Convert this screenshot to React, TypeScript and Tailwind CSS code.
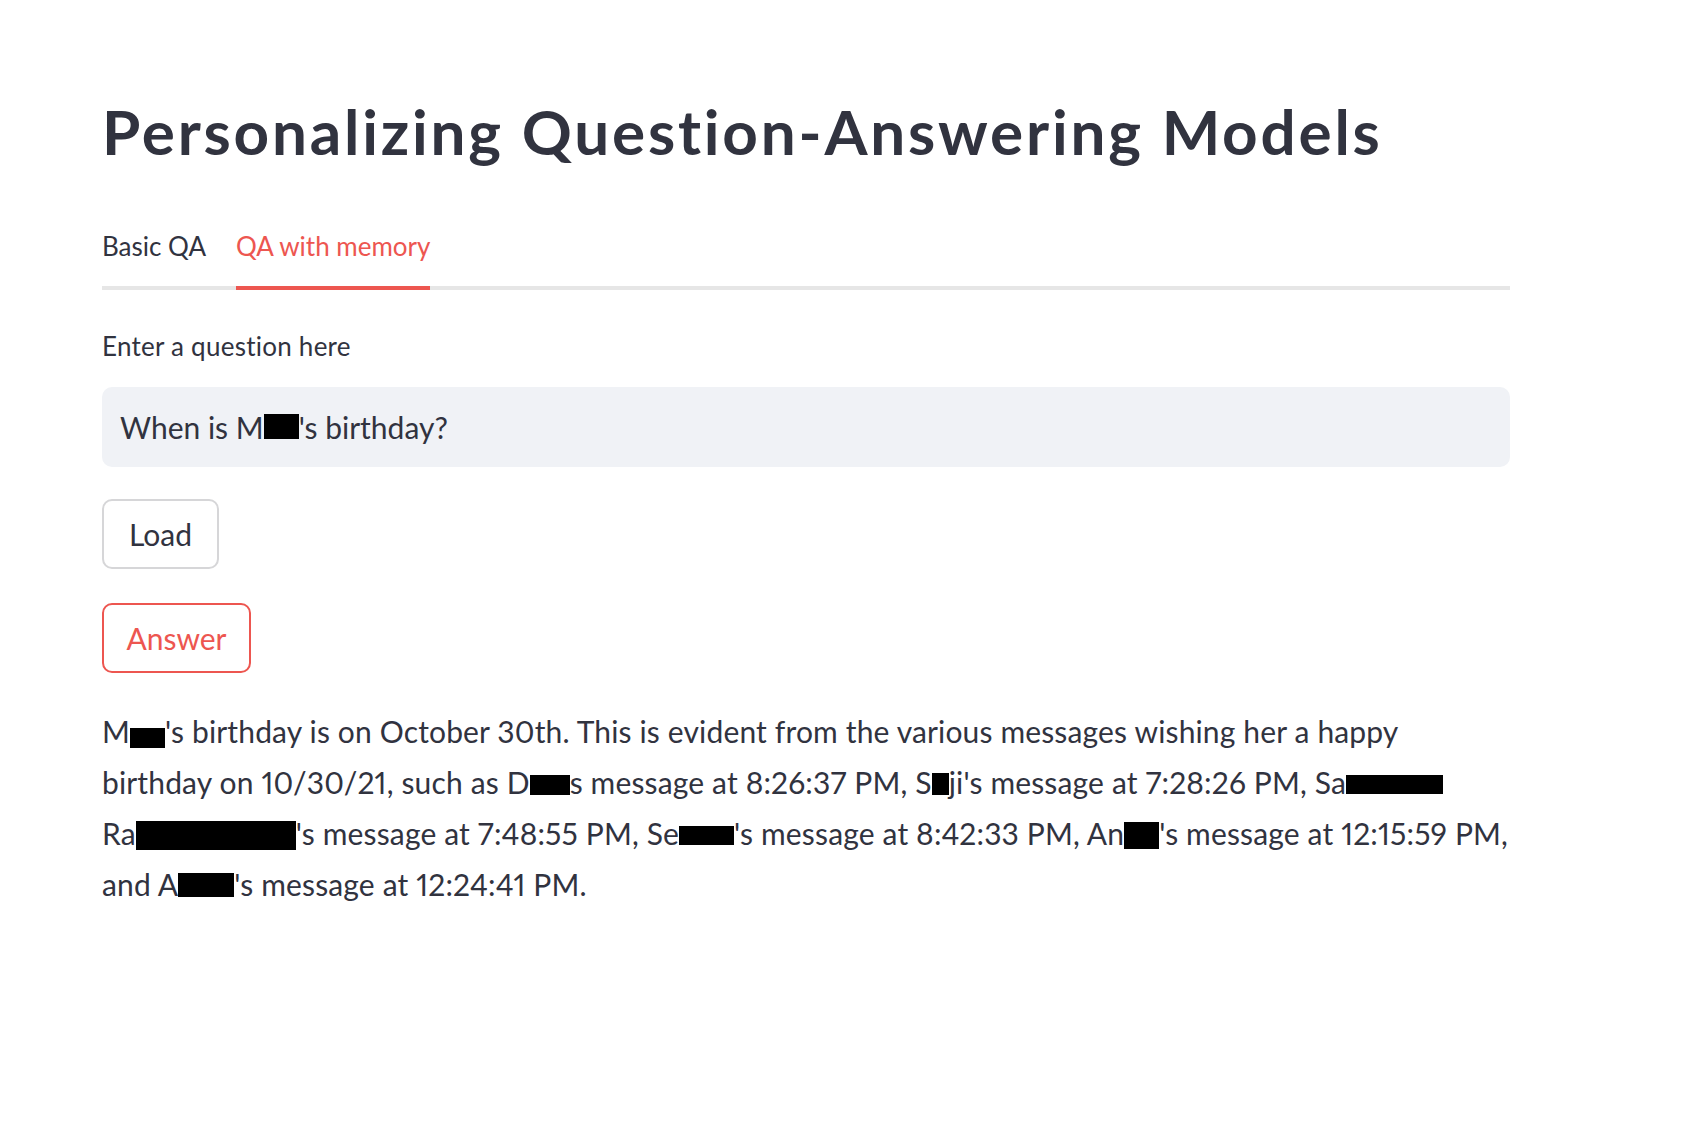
import React from "react";

const Redact: React.FC<{ className: string }> = ({ className }) => (
  <span className={`inline-block bg-black ${className}`} />
);

const App: React.FC = () => {
  return (
    <div className="min-h-screen bg-white font-['Lato',sans-serif] text-[#31333f]">
      <div className="ml-[102px] w-[1408px] pt-[95px]">
        <h1 className="text-[62px] font-bold leading-[73px] tracking-[2.8px]">Personalizing Question-Answering Models</h1>

        {/* tabs */}
        <div className="mt-[63px] flex gap-[30px] border-b-4 border-[#e6e6e6]">
          <button className="-mb-[4px] border-b-4 border-transparent pb-[25px] text-[26px] leading-[30px]">Basic QA</button>
          <button className="-mb-[4px] border-b-4 border-[#ed5650] pb-[25px] text-[26px] leading-[30px] text-[#ed5650]">
            QA with memory
          </button>
        </div>

        <label className="mt-[41px] block text-[26px] leading-[30px] tracking-[0.25px]">Enter a question here</label>
        <div className="mt-[26px] flex h-[80px] items-center rounded-[10px] bg-[#f0f2f6] pl-[18px] text-[30px]">
          <span>
            When is M<Redact className="h-[25px] w-[35px] align-[0px]" />'s birthday?
          </span>
        </div>

        <div className="mt-[32px] flex flex-col items-start gap-[34px]">
          <button className="flex h-[70px] w-[117px] items-center justify-center rounded-[10px] border-2 border-[#d6d6d8] text-[30px]">
            Load
          </button>
          <button className="flex h-[70px] w-[149px] items-center justify-center rounded-[10px] border-2 border-[#ed5650] text-[30px] text-[#ed5650]">
            Answer
          </button>
        </div>

        <p className="mt-[33px] whitespace-nowrap text-[30px] leading-[51px] tracking-[0.15px] proportional-nums">
          M<Redact className="h-[20px] w-[35px] align-[-5px]" />'s birthday is on October 30th. This is evident from the
          various messages wishing her a happy
          <br />
          birthday on 10/30/21, such as D<Redact className="h-[20px] w-[40px] align-[-1px]" />s message at 8:26:37 PM, S
          <Redact className="h-[22px] w-[17px] align-[-1px]" />ji's message at 7:28:26 PM, Sa
          <Redact className="h-[19px] w-[97px] align-[0px]" />
          <br />
          Ra<Redact className="h-[29px] w-[160px] align-[-5px]" />'s message at 7:48:55 PM, Se
          <Redact className="h-[19px] w-[55px] align-[0px]" />'s message at 8:42:33 PM, An
          <Redact className="h-[27px] w-[35px] align-[-4px]" />'s message at 12:15:59 PM,
          <br />
          and A<Redact className="h-[24px] w-[56px] align-[-1px]" />'s message at 12:24:41 PM.
        </p>
      </div>
    </div>
  );
};

export default App;
